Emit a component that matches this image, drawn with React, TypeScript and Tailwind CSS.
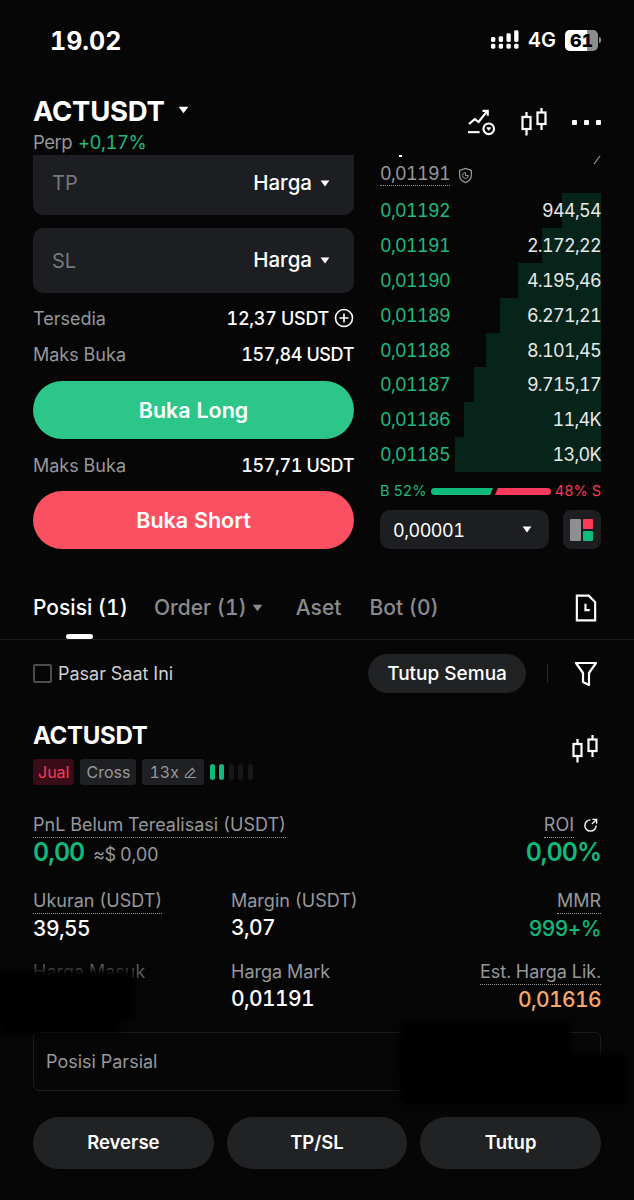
import React from "react";

const font = { fontFamily: "Inter, 'Liberation Sans', sans-serif" };

const rows: [string, string, number][] = [
  ["0,01192", "944,54", 39],
  ["0,01191", "2.172,22", 59],
  ["0,01190", "4.195,46", 83],
  ["0,01189", "6.271,21", 101],
  ["0,01188", "8.101,45", 115],
  ["0,01187", "9.715,17", 127],
  ["0,01186", "11,4K", 137],
  ["0,01185", "13,0K", 146],
];

function Caret({ className = "" }: { className?: string }) {
  return (
    <svg viewBox="0 0 10 7" className={className} fill="currentColor">
      <path d="M0.6 0.6h8.8L5 6.4z" />
    </svg>
  );
}

function Candles({ className = "" }: { className?: string }) {
  return (
    <svg viewBox="0 0 26 28" className={className} fill="none" stroke="currentColor" strokeWidth="2.2">
      <path d="M5.5 4v5M5.5 21v6.5M20.5 0v4.5M20.5 16v6" />
      <rect x="1.5" y="9" width="8" height="12" />
      <rect x="16.5" y="4.5" width="8" height="11.5" />
    </svg>
  );
}

function Field({ label, h, top }: { label: string; h: string; top?: boolean }) {
  return (
    <div className={`flex items-center justify-between pl-[19px] pr-[24px] bg-[#1d1e21] ${h} ${top ? "rounded-b-[10px] pb-[4px]" : "rounded-[10px]"}`}>
      <span className="text-[20px] text-[#77787b]">{label}</span>
      <span className="flex items-center gap-[8px] text-[20.5px] font-medium text-white">
        Harga
        <Caret className="w-[10px] h-[7px]" />
      </span>
    </div>
  );
}

function Stat({ label, value, valueClass = "text-white", dotted = false, align = "left", className = "" }: { label: string; value: string; valueClass?: string; dotted?: boolean; align?: "left" | "right"; className?: string }) {
  return (
    <div className={`flex flex-col ${align === "right" ? "items-end" : "items-start"} ${className}`}>
      <span className={`text-[18px] leading-[24px] text-[#97989b] ${dotted ? "border-b border-dotted border-[#97989b]" : ""}`}>{label}</span>
      <span className={`text-[21px] leading-[27px] font-medium tracking-[-0.6px] mt-[1px] ${valueClass}`}>{value}</span>
    </div>
  );
}

export default function App() {
  return (
    <div style={font} className="relative w-[634px] h-[1200px] overflow-hidden bg-[#060607] text-white flex flex-col tabular-nums">
      {/* Status bar */}
      <div className="h-[80px] shrink-0 flex items-center justify-between pl-[50px] pr-[33px]">
        <span className="text-[25px] font-bold mt-[4px]">19.02</span>
        <div className="flex items-center gap-[9px]">
          <svg viewBox="0 0 29 20" className="w-[28px] h-[20px]" fill="white">
            <rect x="0" y="7" width="4.5" height="5" rx="1.5" />
            <rect x="0" y="14" width="4.5" height="5" rx="1.5" />
            <rect x="8" y="6" width="4.5" height="6" rx="1.5" />
            <rect x="8" y="14" width="4.5" height="5" rx="1.5" />
            <rect x="16" y="3" width="4.5" height="9" rx="1.5" />
            <rect x="16" y="14" width="4.5" height="5" rx="1.5" />
            <rect x="24" y="0" width="4.5" height="12" rx="1.5" />
            <rect x="24" y="14" width="4.5" height="5" rx="1.5" />
          </svg>
          <span className="text-[20px] font-semibold leading-none">4G</span>
          <div className="flex items-center">
            <div className="relative w-[33px] h-[21px] rounded-[5px] overflow-hidden bg-[#8d8d8d] flex">
              <div className="w-[22px] h-full bg-white" />
              <span className="absolute inset-0 flex items-center justify-center text-[18px] font-extrabold text-black">61</span>
            </div>
            <div className="w-[2px] h-[6px] ml-[1px] rounded-r bg-[#8d8d8d]" />
          </div>
        </div>
      </div>

      {/* Header */}
      <div className="h-[75px] shrink-0 px-[33px] flex justify-between">
        <div className="pt-[15px]">
          <div className="flex items-center gap-[14px]">
            <span className="text-[27.5px] leading-[32px] font-bold tracking-[-0.3px]">ACTUSDT</span>
            <Caret className="w-[11px] h-[8px] mb-[3px]" />
          </div>
          <div className="flex gap-[6px] text-[18.5px] leading-[24px] mt-[3px] tracking-[-0.5px]">
            <span className="text-[#97989b]">Perp</span>
            <span className="text-[#1fb97f]">+0,17%</span>
          </div>
        </div>
        <div className="flex items-start gap-[25px] pt-[28px]">
          <svg viewBox="0 0 30 28" className="w-[29px] h-[27px] mt-[1px]" fill="none" stroke="white" strokeWidth="2.2">
            <path d="M2 15.5l6-5 4 3L21 2M16 2h5.5v5" />
            <path d="M1 24h12" />
            <circle cx="22.5" cy="20.5" r="5.5" />
            <path d="M20.5 19.5h4l-2 2.5z" fill="white" strokeWidth="1" />
          </svg>
          <Candles className="w-[26px] h-[28px]" />
          <div className="flex items-center gap-[7px] h-[28px]">
            <div className="w-[5px] h-[5px] bg-white rounded-[1px]" />
            <div className="w-[5px] h-[5px] bg-white rounded-[1px]" />
            <div className="w-[5px] h-[5px] bg-white rounded-[1px]" />
          </div>
        </div>
      </div>

      {/* Trade area */}
      <div className="h-[435px] shrink-0 flex gap-[26px] pl-[33px] pr-[33px]">
        <div className="w-[321px] flex flex-col">
          <Field label="TP" h="h-[60px]" top />
          <div className="h-[13px]" />
          <Field label="SL" h="h-[65px]" />
          <div className="flex items-center justify-between h-[36px] mt-[7px] text-[18px]">
            <span className="text-[#97989b]">Tersedia</span>
            <span className="flex items-center gap-[5px] font-medium tracking-[-0.3px]">
              12,37 USDT
              <svg viewBox="0 0 20 20" className="w-[20px] h-[20px]" fill="none" stroke="white" strokeWidth="1.6">
                <circle cx="10" cy="10" r="8.5" />
                <path d="M10 5.5v9M5.5 10h9" />
              </svg>
            </span>
          </div>
          <div className="flex items-center justify-between h-[36px] text-[18px]">
            <span className="text-[#97989b]">Maks Buka</span>
            <span className="font-medium tracking-[-0.4px]">157,84 USDT</span>
          </div>
          <button className="h-[58px] mt-[9px] rounded-full bg-[#2cc68a] text-[21.5px] font-semibold text-white">Buka Long</button>
          <div className="flex items-center justify-between h-[36px] mt-[8px] text-[18px]">
            <span className="text-[#97989b]">Maks Buka</span>
            <span className="font-medium tracking-[-0.4px]">157,71 USDT</span>
          </div>
          <button className="h-[58px] mt-[8px] rounded-full bg-[#fb4f62] text-[21.5px] font-semibold text-white">Buka Short</button>
        </div>

        <div className="w-[221px] relative flex flex-col">
          <div className="absolute left-[19px] top-[0px] w-[3px] h-[2px] bg-white" />
          <svg viewBox="0 0 8 10" className="absolute right-[0px] top-[0px] w-[8px] h-[10px]" fill="none" stroke="#97989b" strokeWidth="1.2">
            <path d="M1 9L7 1" />
          </svg>
          <div className="h-[38px] flex items-end pb-[7px] gap-[5px]">
            <span className="text-[18px] leading-[22px] text-[#97989b] border-b border-dotted border-[#97989b] tracking-[-0.7px]">0,01191</span>
            <svg viewBox="0 0 18 20" className="w-[15px] h-[17px] mb-[2px] ml-[3px]" fill="none" stroke="#97989b" strokeWidth="1.5">
              <path d="M9 1.5l7 2.5v6c0 4-3 6.8-7 8.5-4-1.7-7-4.5-7-8.5V4z" />
              <path d="M9 6.5a3.5 3.5 0 1 0 3.5 3.5H9z" strokeWidth="1.2" />
            </svg>
          </div>
          <div className="flex flex-col">
            {rows.map(([p, q, w]) => (
              <div key={p} className="relative h-[34.9px] flex items-center justify-between text-[18px] tracking-[-0.7px]">
                <div className="absolute right-0 top-0 bottom-0 bg-[#07241a]" style={{ width: w }} />
                <span className="relative text-[#1fb97f]">{p}</span>
                <span className="relative text-[#e8e8e8]">{q}</span>
              </div>
            ))}
          </div>
          <div className="h-[38px] flex items-center justify-between text-[14.5px]">
            <span className="text-[#1fb97f] whitespace-nowrap">B 52%</span>
            <svg viewBox="0 0 122 7" className="w-[120px] h-[7px] shrink-0">
              <path d="M3.5 0H63L60 7H3.5a3.5 3.5 0 0 1 0-7z" fill="#10b97c" />
              <path d="M68 0h50.5a3.5 3.5 0 0 1 0 7H65z" fill="#f93a5a" />
            </svg>
            <span className="text-[#f93a5a] whitespace-nowrap">48% S</span>
          </div>
          <div className="flex justify-between">
            <div className="w-[169px] h-[39px] rounded-[10px] bg-[#1d1e21] flex items-center justify-between pl-[13px] pr-[17px]">
              <span className="text-[18px] text-white tracking-[-0.5px] mt-[1px]">0,00001</span>
              <Caret className="w-[10px] h-[7px]" />
            </div>
            <div className="w-[38px] h-[39px] rounded-[8px] bg-[#1d1e21] flex items-center justify-center">
              <svg viewBox="0 0 24 24" className="w-[24px] h-[24px]">
                <rect x="0" y="1" width="11" height="22" rx="1" fill="#8e8f91" />
                <rect x="13" y="1" width="10" height="10" rx="1" fill="#f93a5a" />
                <rect x="13" y="13" width="10" height="10" rx="1" fill="#10b97c" />
              </svg>
            </div>
          </div>
        </div>
      </div>

      {/* Tabs */}
      <div className="relative h-[50px] shrink-0 border-b border-[#1c1c1e] flex items-start justify-between px-[33px] pt-[6px]">
        <div className="flex items-center text-[21px] leading-[24px]">
          <span className="font-medium text-white">Posisi (1)</span>
          <span className="ml-[26px] font-medium text-[#8a8b8e] flex items-center gap-[5px]">
            Order (1)
            <Caret className="w-[11px] h-[8px]" />
          </span>
          <span className="ml-[33px] font-medium text-[#8a8b8e]">Aset</span>
          <span className="ml-[28px] font-medium text-[#8a8b8e]">Bot (0)</span>
        </div>
        <svg viewBox="0 0 20 26" className="w-[22px] h-[28px] mr-[4px] -mt-[2px]" fill="none" stroke="white" strokeWidth="2">
          <path d="M1.5 1.5h11l6 6v17h-17z" />
          <path d="M9.5 9v6h4" />
        </svg>
        <div className="absolute left-[66px] bottom-[0px] w-[27px] h-[5px] rounded-full bg-white" />
      </div>

      {/* Filter row */}
      <div className="h-[39px] mt-[14px] shrink-0 flex items-center justify-between px-[33px]">
        <div className="flex items-center gap-[6px]">
          <div className="w-[19px] h-[19px] rounded-[2px] border-2 border-[#4b4c4f]" />
          <span className="text-[18px] text-[#d0d0d2]">Pasar Saat Ini</span>
        </div>
        <div className="flex items-center">
          <div className="w-[158px] h-[39px] pt-[2px] rounded-full bg-[#212224] flex items-center justify-center text-[19px] font-medium">Tutup Semua</div>
          <div className="w-px h-[19px] bg-[#2a2a2c] ml-[21px]" />
          <svg viewBox="0 0 24 26" className="w-[24px] h-[26px] ml-[26px] mr-[3px]" fill="none" stroke="white" strokeWidth="2.2" strokeLinejoin="round">
            <path d="M2 2h20l-7 10v12l-6-3v-9z" />
          </svg>
        </div>
      </div>

      {/* Position header */}
      <div className="h-[74px] mt-[27px] shrink-0 flex justify-between px-[33px]">
        <div>
          <div className="text-[24px] leading-[32px] font-bold tracking-[-0.3px]">ACTUSDT</div>
          <div className="flex items-center gap-[6px] mt-[7px] text-[16px]">
            <span className="h-[26px] px-[5px] rounded-[3px] bg-[#3a0c17] text-[#f93a5a] flex items-center">Jual</span>
            <span className="h-[26px] px-[6px] rounded-[3px] bg-[#1f2023] text-[#97989b] flex items-center">Cross</span>
            <span className="h-[26px] px-[7px] rounded-[3px] bg-[#1f2023] text-[#97989b] flex items-center gap-[5px]">
              13x
              <svg viewBox="0 0 14 14" className="w-[13px] h-[13px]" fill="none" stroke="#97989b" strokeWidth="1.1">
                <path d="M1.5 10L9 2.5l2.5 2.5L4.5 12.5H13M1.5 10v2.5h3" />
              </svg>
            </span>
            <div className="flex gap-[4.5px]">
              <div className="w-[5px] h-[16px] rounded-full bg-[#10b97c]" />
              <div className="w-[5px] h-[16px] rounded-full bg-[#10b97c]" />
              <div className="w-[5px] h-[16px] rounded-full bg-[#17181a]" />
              <div className="w-[5px] h-[16px] rounded-full bg-[#17181a]" />
              <div className="w-[5px] h-[16px] rounded-full bg-[#17181a]" />
            </div>
          </div>
        </div>
        <Candles className="w-[26px] h-[28px] mt-[15px] mr-[3px]" />
      </div>

      {/* PnL */}
      <div className="mt-[19px] shrink-0 flex justify-between px-[33px]">
        <div>
          <span className="inline-block text-[18px] leading-[24px] text-[#97989b] border-b border-dotted border-[#97989b]">PnL Belum Terealisasi (USDT)</span>
          <div className="flex items-baseline gap-[9px] leading-[29px]">
            <span className="text-[25px] font-semibold text-[#10b97c] tracking-[-1px]">0,00</span>
            <span className="text-[18px] text-[#97989b] tracking-[-0.4px]">≈$ 0,00</span>
          </div>
        </div>
        <div className="flex flex-col items-end">
          <div className="flex items-center gap-[9px]">
            <span className="text-[18px] leading-[24px] text-[#97989b] border-b border-dotted border-[#97989b]">ROI</span>
            <svg viewBox="0 0 16 16" className="w-[15px] h-[15px] mr-[3px]" fill="none" stroke="white" strokeWidth="1.5">
              <path d="M8 2a6 6 0 1 0 6 6M9.5 6.5L14 2M10 1.5h4.5V6" />
            </svg>
          </div>
          <span className="text-[25px] leading-[29px] font-semibold text-[#10b97c] tracking-[-1px]">0,00%</span>
        </div>
      </div>

      {/* Stats */}
      <div className="mt-[20px] shrink-0 grid grid-cols-[198px_1fr_auto] px-[33px] gap-y-[18px]">
        <Stat label="Ukuran (USDT)" value="39,55" dotted />
        <Stat label="Margin (USDT)" value="3,07" />
        <Stat label="MMR" value="999+%" valueClass="text-[#10b97c]" dotted align="right" />
        <Stat label="Harga Masuk" value="" className="opacity-60" />
        <Stat label="Harga Mark" value="0,01191" />
        <Stat label="Est. Harga Lik." value="0,01616" valueClass="text-[#f7a86a]" dotted align="right" />
      </div>

      {/* Partial */}
      <div className="mx-[33px] mt-[19px] h-[59px] shrink-0 rounded-[6px] border border-[#1c1c1e] flex items-center pl-[12px]">
        <span className="text-[18px] text-[#97989b]">Posisi Parsial</span>
      </div>

      {/* Actions */}
      <div className="mt-[26px] shrink-0 grid grid-cols-3 gap-[13px] px-[33px]">
        <button className="h-[52px] rounded-full bg-[#212224] text-[18.5px] font-semibold">Reverse</button>
        <button className="h-[52px] rounded-full bg-[#212224] text-[18.5px] font-semibold">TP/SL</button>
        <button className="h-[52px] rounded-full bg-[#212224] text-[18.5px] font-semibold">Tutup</button>
      </div>

      {/* Redaction scribbles */}
      <div className="absolute left-0 top-[970px] w-[135px] h-[50px] bg-black blur-[3px]" />
      <div className="absolute left-0 top-[1015px] w-[120px] h-[18px] bg-black blur-[3px]" />
      <div className="absolute left-[400px] top-[1021px] w-[170px] h-[40px] bg-black blur-[3px]" />
      <div className="absolute left-[400px] top-[1054px] w-[225px] h-[50px] bg-black blur-[3px]" />
    </div>
  );
}
